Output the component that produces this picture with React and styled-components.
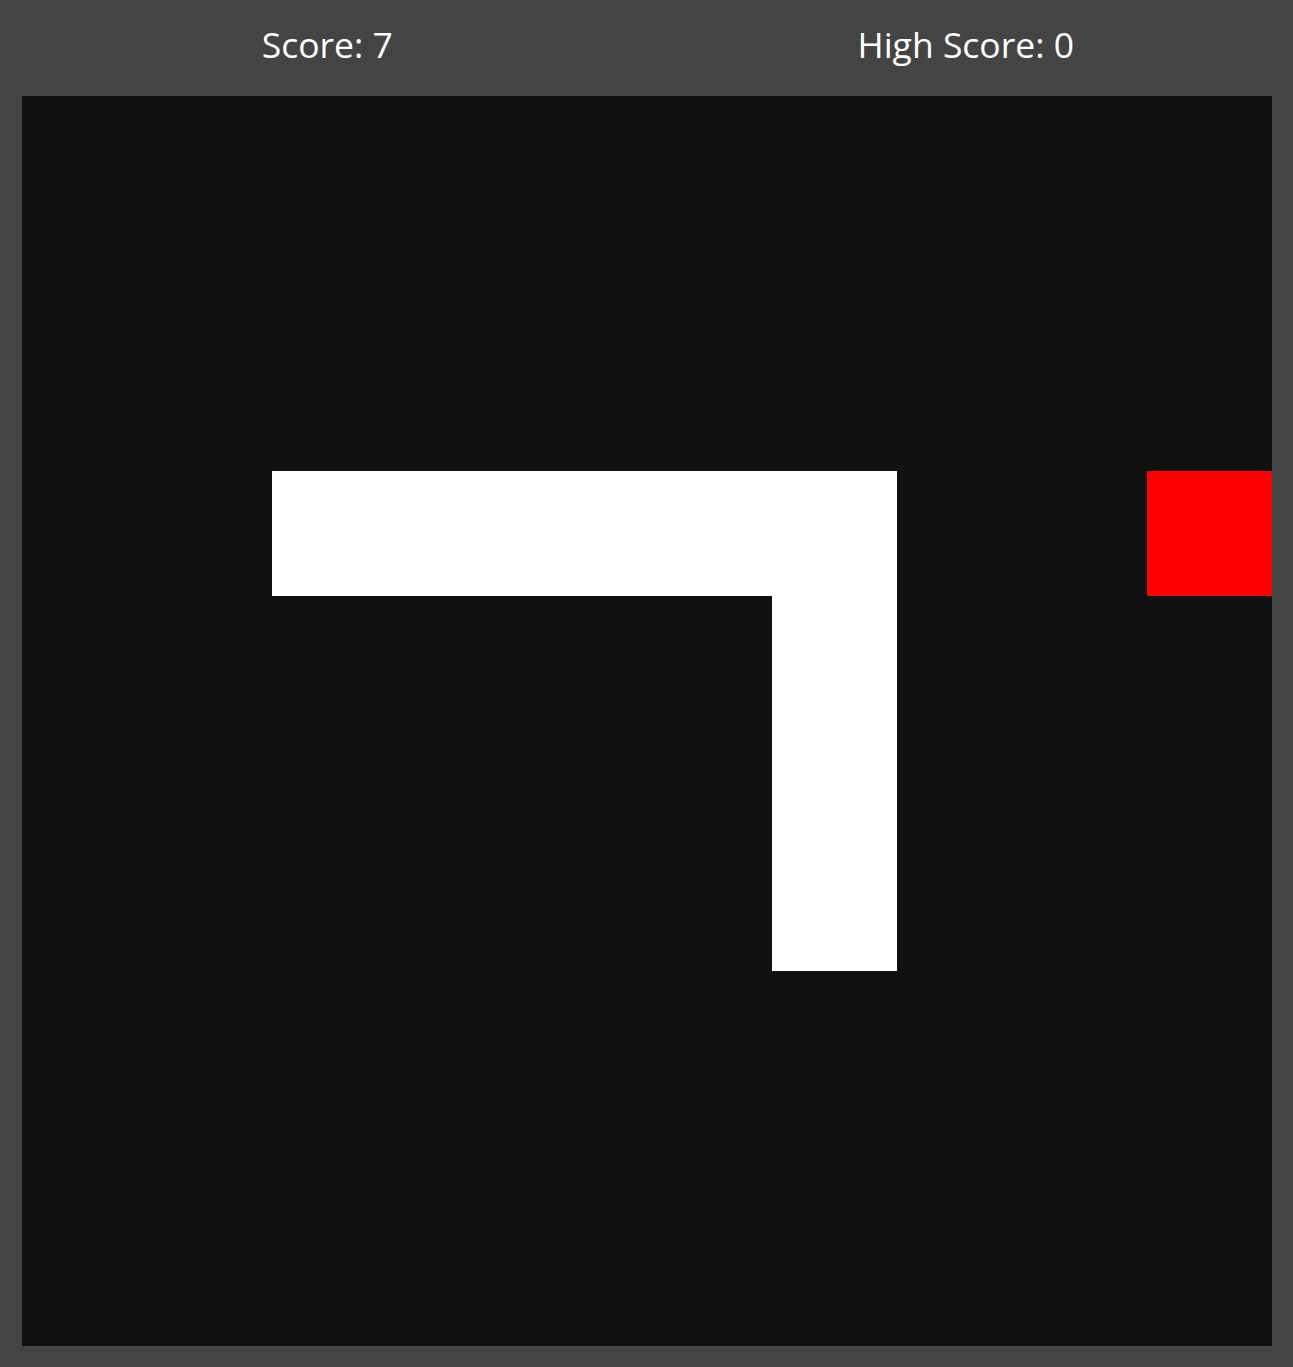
import styled, { createGlobalStyle } from 'styled-components';

const GRID = 10;
const CELL = 125;

// snake body, head last
const snake = [
  { x: 6, y: 6 },
  { x: 6, y: 5 },
  { x: 6, y: 4 },
  { x: 6, y: 3 },
  { x: 5, y: 3 },
  { x: 4, y: 3 },
  { x: 3, y: 3 },
  { x: 2, y: 3 },
];
const food = { x: 9, y: 3 };

const GlobalStyle = createGlobalStyle`
  html, body {
    margin: 0;
    padding: 0;
    background: #444444;
  }
  body {
    font-family: "Open Sans", "Noto Sans", sans-serif;
    color: #ffffff;
  }
`;

const App = () => {
  return (
    <Page>
      <GlobalStyle />
      <ScoreBar>
        <ScoreText>Score: 7</ScoreText>
        <ScoreText>High Score: 0</ScoreText>
      </ScoreBar>
      <Board>
        {snake.map((part, i) => (
          <Cell key={i} $x={part.x} $y={part.y} $color="#ffffff" />
        ))}
        <Cell $x={food.x} $y={food.y} $color="#ff0000" />
      </Board>
    </Page>
  );
};

export default App;

const Page = styled.div`
  display: flex;
  flex-direction: column;
  align-items: center;
  padding: 0 8px 21px;
`;

const ScoreBar = styled.div`
  display: grid;
  grid-template-columns: 1fr 1fr;
  width: 100%;
  height: 96px;
  box-sizing: border-box;
  padding-top: 20px;
`;

const ScoreText = styled.div`
  text-align: center;
  font-size: 35.5px;
  line-height: 1.36;
  font-weight: 400;
`;

const Board = styled.div`
  display: grid;
  grid-template-columns: repeat(${GRID}, ${CELL}px);
  grid-template-rows: repeat(${GRID}, ${CELL}px);
  width: ${GRID * CELL}px;
  height: ${GRID * CELL}px;
  background: #111111;
`;

const Cell = styled.div`
  grid-column: ${(p) => p.$x + 1};
  grid-row: ${(p) => p.$y + 1};
  background: ${(p) => p.$color};
`;
